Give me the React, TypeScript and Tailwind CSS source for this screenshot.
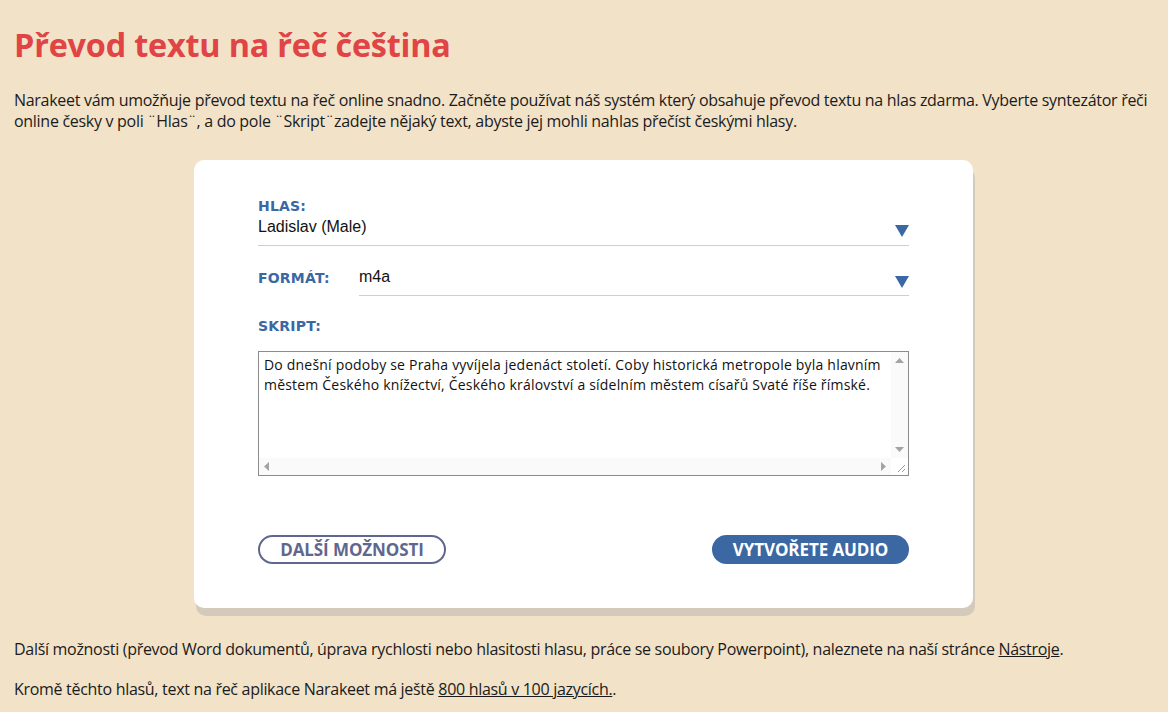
import { useState } from 'react';

function Caret() {
  return (
    <svg width="14" height="12" viewBox="0 0 14 12" className="shrink-0">
      <path d="M0 0 H14 L7 12 Z" fill="#3b67a3" />
    </svg>
  );
}

function Arrow({ dir }: { dir: 'up' | 'down' | 'left' | 'right' }) {
  const d = {
    up: 'M0 5 L4.5 0 L9 5 Z',
    down: 'M0 0 L9 0 L4.5 5 Z',
    left: 'M5 0 L5 9 L0 4.5 Z',
    right: 'M0 0 L5 4.5 L0 9 Z',
  }[dir];
  const vertical = dir === 'up' || dir === 'down';
  return (
    <svg width={vertical ? 9 : 5} height={vertical ? 5 : 9} viewBox={vertical ? '0 0 9 5' : '0 0 5 9'}>
      <path d={d} fill="#a3a3a3" />
    </svg>
  );
}

export default function App() {
  const [text, setText] = useState(
    'Do dnešní podoby se Praha vyvíjela jedenáct století. Coby historická metropole byla hlavním městem Českého knížectví, Českého království a sídelním městem císařů Svaté říše římské.'
  );

  const label = "text-[14px] font-bold text-[#3b67a3] leading-[16px] font-['DejaVu_Sans',sans-serif] tracking-[0.2px]";

  return (
    <div className="min-h-[712px] bg-[#f2e2c8] pl-[14px] pr-[8px] pt-[22px] pb-4 text-[#1b1b1b] font-['Open_Sans',sans-serif]">
      <h1 className="text-[32.4px] font-bold text-[#e04444] leading-[44px] tracking-[-0.2px]">
        Převod textu na řeč čeština
      </h1>

      <p className="mt-[24px] text-[16px] leading-[21px] tracking-[-0.29px]">
        Narakeet vám umožňuje převod textu na řeč online snadno. Začněte používat náš systém který obsahuje převod textu na hlas zdarma. Vyberte syntezátor řeči online česky v poli ¨Hlas¨, a do pole ¨Skript¨zadejte nějaký text, abyste jej mohli nahlas přečíst českými hlasy.
      </p>

      <div className="ml-[180px] mt-[28px] w-[779px] rounded-[10px] bg-white shadow-[2px_8px_0_#d4cabb] px-[64px] pt-[38px] pb-[44px]">
        {/* Hlas */}
        <div className="border-b border-[#cfcfcf] pb-[8px]">
          <div className={label}>HLAS:</div>
          <div className="mt-[3px] flex items-end justify-between">
            <span className="text-[16px] leading-[20px] font-['Liberation_Sans',sans-serif] text-[#111]">
              Ladislav (Male)
            </span>
            <span className="mb-[0px]">
              <Caret />
            </span>
          </div>
        </div>

        {/* Format */}
        <div className="mt-[21px] flex items-end">
          <div className={`w-[101px] pb-[10px] ${label}`}>FORMÁT:</div>
          <div className="flex flex-1 items-end justify-between border-b border-[#cfcfcf] pb-[8px]">
            <span className="text-[16px] leading-[20px] font-['Liberation_Sans',sans-serif] text-[#111]">m4a</span>
            <span className="mb-[-1px]">
              <Caret />
            </span>
          </div>
        </div>

        {/* Skript */}
        <div className={`mt-[22px] ${label}`}>SKRIPT:</div>
        <div className="mt-[17px] flex h-[125px] flex-col border border-[#8c8c8c]">
          <div className="flex flex-1 min-h-0">
            <textarea
              value={text}
              onChange={(e) => setText(e.target.value)}
              className="flex-1 resize-none overflow-hidden px-[5px] py-[3px] text-[14px] leading-[20px] tracking-[0.2px] text-[#111] outline-none font-['Open_Sans',sans-serif]"
            />
            <div className="flex w-[17px] flex-col items-center justify-between bg-[#fafafa] py-[6px]">
              <Arrow dir="up" />
              <Arrow dir="down" />
            </div>
          </div>
          <div className="flex h-[17px]">
            <div className="flex flex-1 items-center justify-between bg-[#fafafa] px-[5px]">
              <Arrow dir="left" />
              <Arrow dir="right" />
            </div>
            <div className="relative w-[17px] bg-white">
              <svg width="17" height="17" viewBox="0 0 17 17" className="absolute inset-0">
                <path d="M14 7 L7 14 M14 11 L11 14" stroke="#9a9a9a" strokeWidth="1" />
              </svg>
            </div>
          </div>
        </div>

        {/* Buttons */}
        <div className="mt-[59px] flex items-center justify-between">
          <button className="h-[29px] w-[188px] rounded-full border-2 border-[#5f678e] text-[17px] font-bold text-[#5f678e] tracking-[-0.1px]">
            DALŠÍ MOŽNOSTI
          </button>
          <button className="h-[29px] w-[197px] rounded-full bg-[#3b67a3] text-[17px] font-bold text-white tracking-[-0.1px]">
            VYTVOŘETE AUDIO
          </button>
        </div>
      </div>

      <p className="mt-[31px] text-[16px] leading-[21px] tracking-[-0.3px]">
        Další možnosti (převod Word dokumentů, úprava rychlosti nebo hlasitosti hlasu, práce se soubory Powerpoint), naleznete na naší stránce{' '}
        <a href="#" className="underline">Nástroje</a>.
      </p>
      <p className="mt-[19px] text-[16px] leading-[21px] tracking-[-0.3px]">
        Kromě těchto hlasů, text na řeč aplikace Narakeet má ještě{' '}
        <a href="#" className="underline">800 hlasů v 100 jazycích.</a>.
      </p>
    </div>
  );
}
